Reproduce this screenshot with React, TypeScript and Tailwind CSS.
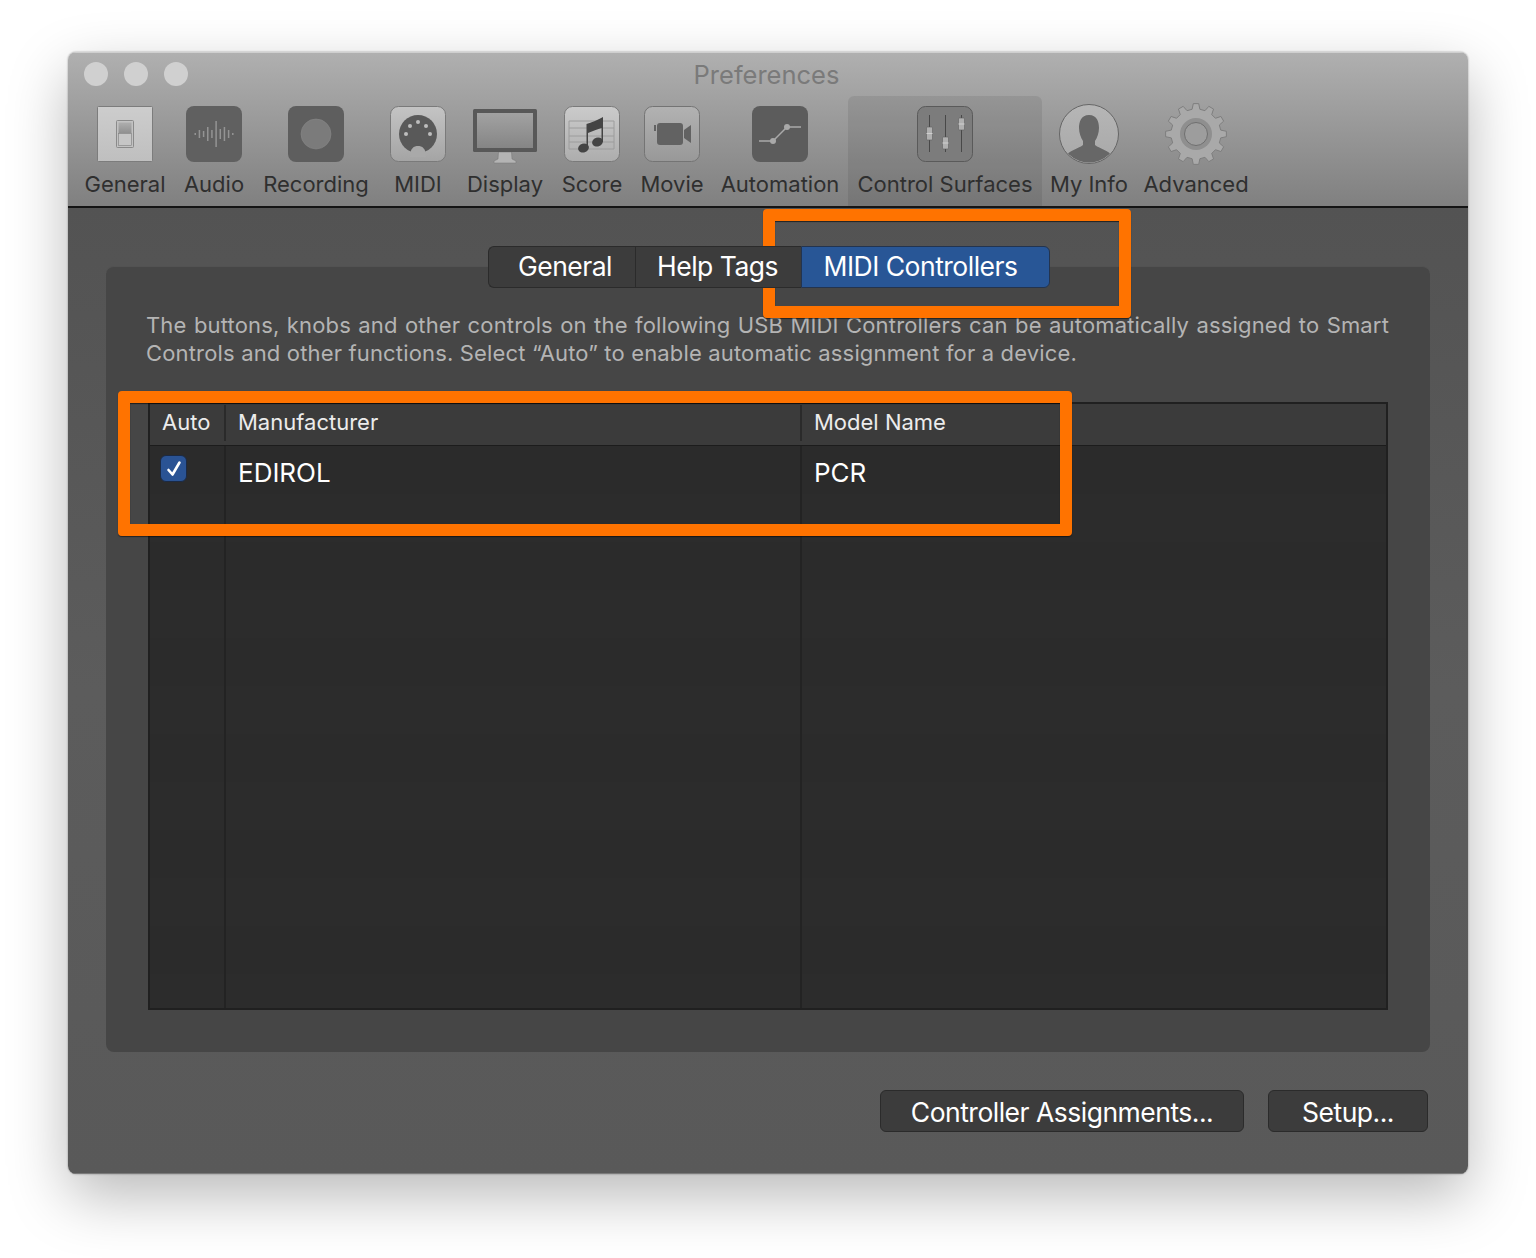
const font = "font-['Inter','Liberation_Sans',sans-serif]";

// gear outline built from the tooth count
const gearPath = (() => {
  const pts: string[] = [];
  const teeth = 12;
  for (let i = 0; i < teeth; i++) {
    const a = (i / teeth) * Math.PI * 2;
    const step = (Math.PI * 2) / teeth;
    const p = (r: number, t: number) =>
      `${(32 + r * Math.cos(t)).toFixed(2)} ${(32 + r * Math.sin(t)).toFixed(2)}`;
    pts.push(`${i === 0 ? "M" : "L"}${p(25, a - step * 0.3)}`);
    pts.push(`L${p(30.5, a - step * 0.17)}`);
    pts.push(`L${p(30.5, a + step * 0.17)}`);
    pts.push(`L${p(25, a + step * 0.3)}`);
  }
  return pts.join(" ") + " Z";
})();

const GeneralIcon = () => (
  <svg width="64" height="64" viewBox="0 0 64 64">
    <defs>
      <linearGradient id="genBox" x1="0" y1="0" x2="0" y2="1">
        <stop offset="0" stopColor="#cdcdcd" />
        <stop offset="1" stopColor="#bfbfbf" />
      </linearGradient>
      <linearGradient id="genTop" x1="0" y1="0" x2="0" y2="1">
        <stop offset="0" stopColor="#aeaeae" />
        <stop offset="1" stopColor="#8f8f8f" />
      </linearGradient>
    </defs>
    <rect x="4.5" y="4.5" width="55" height="55" rx="1" fill="url(#genBox)" stroke="#7c7c7c" />
    <rect x="23.5" y="18.5" width="17" height="27" rx="1" fill="#c2c2c2" stroke="#8a8a8a" />
    <rect x="25.5" y="20.5" width="13" height="11" fill="url(#genTop)" />
    <rect x="25.5" y="31.5" width="13" height="12" fill="#c6c6c6" stroke="#7f7f7f" strokeWidth="0.6" />
  </svg>
);

const bars = [1, 4, 3, 7, 4, 13, 5, 7, 4, 1];

const AudioIcon = () => (
  <svg width="64" height="64" viewBox="0 0 64 64">
    <rect x="4" y="4" width="56" height="56" rx="8" fill="#606060" />
    {bars.map((h, i) => (
      <rect key={i} x={12.5 + i * 4.17} y={32 - h} width="1.5" height={h * 2} fill="#949494" />
    ))}
  </svg>
);

const RecordingIcon = () => (
  <svg width="64" height="64" viewBox="0 0 64 64">
    <rect x="4" y="4" width="56" height="56" rx="8" fill="#5e5e5e" />
    <circle cx="32" cy="32" r="15" fill="#7b7b7b" stroke="#8a8a8a" strokeWidth="0.5" />
  </svg>
);

const MidiIcon = () => (
  <svg width="64" height="64" viewBox="0 0 64 64">
    <defs>
      <linearGradient id="midiBox" x1="0" y1="0" x2="0" y2="1">
        <stop offset="0" stopColor="#c4c4c4" />
        <stop offset="1" stopColor="#a4a4a4" />
      </linearGradient>
    </defs>
    <rect x="4.5" y="4.5" width="55" height="55" rx="8" fill="url(#midiBox)" stroke="#7a7a7a" />
    <circle cx="32" cy="32" r="19" fill="#595959" />
    <path d="M24 55 C24 46 28 44 32 44 C36 44 40 46 40 55 Z" fill="#a9a9a9" />
    {[[20, 32], [24, 24], [32, 20], [40, 24], [44, 32]].map(([x, y]) => (
      <circle key={x} cx={x} cy={y} r="2" fill="#bdbdbd" />
    ))}
  </svg>
);

const DisplayIcon = () => (
  <svg width="64" height="64" viewBox="0 0 64 64">
    <defs>
      <linearGradient id="screen" x1="0" y1="0" x2="0" y2="1">
        <stop offset="0" stopColor="#a2a2a2" />
        <stop offset="1" stopColor="#858585" />
      </linearGradient>
    </defs>
    <path d="M25.5 50 L38.5 50 L39 57 L43 59 L43 61 L21 61 L21 59 L25 57 Z" fill="#b4b4b4" stroke="#777" strokeWidth="0.5" />
    <rect x="0" y="7" width="64" height="43" rx="1.5" fill="#585858" />
    <rect x="4" y="11" width="56" height="35" fill="url(#screen)" />
  </svg>
);

const ScoreIcon = () => (
  <svg width="64" height="64" viewBox="0 0 64 64">
    <defs>
      <linearGradient id="scoreBox" x1="0" y1="0" x2="0" y2="1">
        <stop offset="0" stopColor="#cbcbcb" />
        <stop offset="1" stopColor="#adadad" />
      </linearGradient>
    </defs>
    <rect x="4.5" y="4.5" width="55" height="55" rx="8" fill="url(#scoreBox)" stroke="#7a7a7a" />
    {[19, 26, 34, 40, 47].map((y) => (
      <line key={y} x1="9" y1={y} x2="54" y2={y} stroke="#9c9c9c" />
    ))}
    <line x1="9" y1="19" x2="9" y2="47" stroke="#9c9c9c" />
    <line x1="54" y1="19" x2="54" y2="47" stroke="#9c9c9c" />
    <ellipse cx="23.5" cy="46" rx="5.5" ry="4.5" fill="#444" transform="rotate(-18 23.5 46)" />
    <ellipse cx="37.5" cy="40" rx="5.5" ry="4.5" fill="#444" transform="rotate(-18 37.5 40)" />
    <path d="M26.5 46 L26.5 22 Q34 20 43 15 L43 40 L41.5 40 L41.5 26 Q35 28 28 31 L28 46 Z" fill="#444" />
  </svg>
);

const MovieIcon = () => (
  <svg width="64" height="64" viewBox="0 0 64 64">
    <defs>
      <linearGradient id="movieBox" x1="0" y1="0" x2="0" y2="1">
        <stop offset="0" stopColor="#b2b2b2" />
        <stop offset="1" stopColor="#989898" />
      </linearGradient>
    </defs>
    <rect x="4.5" y="4.5" width="55" height="55" rx="8" fill="url(#movieBox)" stroke="#747474" />
    <rect x="17" y="21" width="26" height="22" rx="3" fill="#626262" />
    <path d="M44 28 L51 23 L51 41 L44 36 Z" fill="#626262" />
    <rect x="14" y="23" width="2" height="6" fill="#626262" />
  </svg>
);

const AutomationIcon = () => (
  <svg width="64" height="64" viewBox="0 0 64 64">
    <rect x="4" y="4" width="56" height="56" rx="8" fill="#5c5c5c" />
    <path d="M11 39 L25 39 L39 25 L53 25" fill="none" stroke="#a9a9a9" strokeWidth="1.4" />
    <circle cx="25" cy="39" r="3" fill="#a9a9a9" />
    <circle cx="39" cy="25" r="3" fill="#a9a9a9" />
  </svg>
);

const faders = [
  { x: 16.5, y: 25, h: 13 },
  { x: 32.5, y: 35, h: 12 },
  { x: 48.5, y: 16, h: 12 },
];

const ControlIcon = () => (
  <svg width="64" height="64" viewBox="0 0 64 64">
    <rect x="4.5" y="4.5" width="55" height="55" rx="8" fill="#7c7c7c" stroke="#5a5a5a" />
    {faders.map((f) => (
      <g key={f.x}>
        <line x1={f.x} y1="13" x2={f.x} y2="50" stroke="#484848" />
        <rect x={f.x - 3} y={f.y} width="6" height={f.h} rx="1" fill="#b0b0b0" stroke="#5f5f5f" strokeWidth="0.6" />
        <line x1={f.x - 3} y1={f.y + f.h / 2} x2={f.x + 3} y2={f.y + f.h / 2} stroke="#d0d0d0" />
      </g>
    ))}
  </svg>
);

const MyInfoIcon = () => (
  <svg width="64" height="64" viewBox="0 0 64 64">
    <defs>
      <linearGradient id="infoBg" x1="0" y1="0" x2="0" y2="1">
        <stop offset="0" stopColor="#b6b6b6" />
        <stop offset="1" stopColor="#a8a8a8" />
      </linearGradient>
      <clipPath id="infoClip">
        <circle cx="32" cy="32" r="28.5" />
      </clipPath>
    </defs>
    <circle cx="32" cy="32" r="29.5" fill="url(#infoBg)" stroke="#666" strokeWidth="1" />
    <g clipPath="url(#infoClip)">
      <path
        d="M32 13 C24 13 22 20 22 26 C22 31 24 36 26 39 L26 43 C21 47 12 48 8 55 L8 64 L56 64 L56 55 C52 48 43 47 38 43 L38 39 C40 36 42 31 42 26 C42 20 40 13 32 13 Z"
        fill="#676767"
      />
    </g>
  </svg>
);

const AdvancedIcon = () => (
  <svg width="64" height="64" viewBox="0 0 64 64">
    <path d={gearPath} fill="#a9a9a9" stroke="#7e7e7e" strokeWidth="1" strokeLinejoin="round" />
    <circle cx="32" cy="32" r="16" fill="#8f8f8f" />
    <circle cx="32" cy="32" r="11.5" fill="#9d9d9d" stroke="#6f6f6f" />
  </svg>
);

const tools = [
  { label: "General", icon: <GeneralIcon />, width: "w-[100px]" },
  { label: "Audio", icon: <AudioIcon />, width: "w-[78px]" },
  { label: "Recording", icon: <RecordingIcon />, width: "w-[126px]" },
  { label: "MIDI", icon: <MidiIcon />, width: "w-[78px]" },
  { label: "Display", icon: <DisplayIcon />, width: "w-[96px]" },
  { label: "Score", icon: <ScoreIcon />, width: "w-[78px]" },
  { label: "Movie", icon: <MovieIcon />, width: "w-[82px]" },
  { label: "Automation", icon: <AutomationIcon />, width: "w-[134px]" },
  { label: "Control Surfaces", icon: <ControlIcon />, width: "w-[194px] ml-[1px]", active: true },
  { label: "My Info", icon: <MyInfoIcon />, width: "w-[94px]" },
  { label: "Advanced", icon: <AdvancedIcon />, width: "w-[120px]" },
];

const ToolbarItem = ({ label, icon, width, active }: { label: string; icon: React.ReactNode; width: string; active?: boolean }) => (
  <div className={`flex flex-col items-center pt-[6px] ${width} ${active ? "rounded-t-[6px] bg-black/[0.08]" : ""}`}>
    {icon}
    <span className="mt-[4px] whitespace-nowrap text-[22px] leading-[28px] text-[#2f2f2f]">{label}</span>
  </div>
);

const App = () => {
  return (
    <div className={`min-h-[1258px] bg-white pl-[68px] pt-[52px] ${font}`}>
      <div className="relative flex h-[1122px] w-[1400px] flex-col overflow-hidden rounded-[8px] shadow-[0_22px_60px_rgba(0,0,0,0.28),0_0_2px_rgba(0,0,0,0.4)]">
        {/* title bar + toolbar */}
        <div className="h-[156px] shrink-0 border-b-2 border-[#141414] bg-gradient-to-b from-[#b0b0b0] to-[#808080] shadow-[inset_0_1px_0_#cfcfcf]">
          <div className="relative flex h-[44px] items-center justify-center">
            <div className="absolute left-[16px] top-[10px] flex gap-[16px]">
              <div className="h-[24px] w-[24px] rounded-full bg-[#d0d0d0]" />
              <div className="h-[24px] w-[24px] rounded-full bg-[#d0d0d0]" />
              <div className="h-[24px] w-[24px] rounded-full bg-[#d0d0d0]" />
            </div>
            <span className="pr-[3px] pt-[2px] text-[25.5px] text-[#7a7a7a]">Preferences</span>
          </div>
          <div className="flex h-[110px] pl-[7px]">
            {tools.map((t) => (
              <ToolbarItem key={t.label} {...t} />
            ))}
          </div>
        </div>

        {/* content */}
        <div className="flex flex-1 flex-col bg-gradient-to-b from-[#535353] via-[#5c5c5c] to-[#595959] pt-[38px] shadow-[inset_0_-1px_0_#7a7a7a]">
          <div className="relative z-10 ml-[2px] flex h-[42px] justify-center text-[26.5px] tracking-[-0.5px] text-white">
            <div className="flex w-[147px] items-center justify-center rounded-l-[6px] border border-r-0 border-[#2b2b2b] bg-[#3c3c3c] pl-[6px]">General</div>
            <div className="flex w-[166px] items-center justify-center border-y border-l border-[#2b2b2b] bg-[#3c3c3c] pr-[2px]">Help Tags</div>
            <div className="flex w-[249px] items-center justify-center rounded-r-[6px] border border-[#23344f] bg-[#285696] pr-[10px]">MIDI Controllers</div>
          </div>

          <div className="mx-[38px] -mt-[22px] rounded-[8px] border-t border-[#525252] bg-[#464646] px-[42px] pb-[42px] pt-[44px]">
            <p className="-ml-[2px] whitespace-nowrap text-[22px] leading-[28px] tracking-[0.16px] text-[#b4b4b4]">
              <span className="block w-[1243px] [text-align-last:justify]">The buttons, knobs and other controls on the following USB MIDI Controllers can be automatically assigned to Smart</span>
              <span className="block">Controls and other functions. Select “Auto” to enable automatic assignment for a device.</span>
            </p>

            <div className="mt-[35px] flex h-[608px] flex-col border-2 border-[#202020] bg-[#2b2b2b]">
              <div className="flex h-[42px] shrink-0 items-start border-b border-[#1c1c1c] bg-[#3b3b3b] pt-[1px] text-[22px] text-[#ececec]">
                <div className="flex h-[36px] w-[76px] items-center border-r-2 border-[#2a2a2a] pb-[2px] pl-[12px]">Auto</div>
                <div className="flex h-[36px] w-[576px] items-center border-r-2 border-[#2a2a2a] pb-[2px] pl-[12px]">Manufacturer</div>
                <div className="flex h-[36px] items-center pb-[2px] pl-[12px]">Model Name</div>
              </div>
              {/* rows alternate very faintly, 48px each */}
              <div className="flex flex-1 bg-[repeating-linear-gradient(to_bottom,#2b2b2b_0,#2b2b2b_48px,#2c2c2c_48px,#2c2c2c_96px)]">
                <div className="w-[76px] border-r-2 border-[#232323] pl-[10px] pt-[9px]">
                  <div className="flex h-[27px] w-[27px] items-center justify-center rounded-[6px] border border-[#1b2a44] bg-[#2a5394]">
                    <svg width="20" height="20" viewBox="0 0 20 20">
                      <path d="M4.5 11 L8.5 15.5 L15.5 3.5" fill="none" stroke="#fff" strokeWidth="2.6" strokeLinecap="round" strokeLinejoin="round" />
                    </svg>
                  </div>
                </div>
                <div className="w-[576px] border-r-2 border-[#232323] pl-[12px] pt-[11px] text-[26px] leading-[32px] text-white">EDIROL</div>
                <div className="pl-[12px] pt-[11px] text-[26px] leading-[32px] text-white">PCR</div>
              </div>
            </div>
          </div>

          <div className="mt-[38px] flex justify-end gap-[24px] pr-[40px] text-[26.5px] tracking-[-0.5px] text-white">
            <button className="h-[42px] w-[364px] rounded-[6px] border border-[#2b2b2b] bg-[#3c3c3c] pt-[2px]">Controller Assignments...</button>
            <button className="h-[42px] w-[160px] rounded-[6px] border border-[#2b2b2b] bg-[#3c3c3c] pt-[2px]">Setup...</button>
          </div>
        </div>

        {/* orange annotation boxes drawn over the screenshot */}
        <div className="absolute left-[695px] top-[157px] h-[109px] w-[368px] rounded-[4px] border-[12px] border-[#ff7300] shadow-[0_1px_1px_rgba(0,0,0,0.5),inset_0_1px_1px_rgba(0,0,0,0.6)]" />
        <div className="absolute left-[50px] top-[339px] h-[145px] w-[954px] rounded-[4px] border-[12px] border-[#ff7300] shadow-[0_1px_1px_rgba(0,0,0,0.5),inset_0_1px_1px_rgba(0,0,0,0.6)]" />
      </div>
    </div>
  );
};

export default App;
